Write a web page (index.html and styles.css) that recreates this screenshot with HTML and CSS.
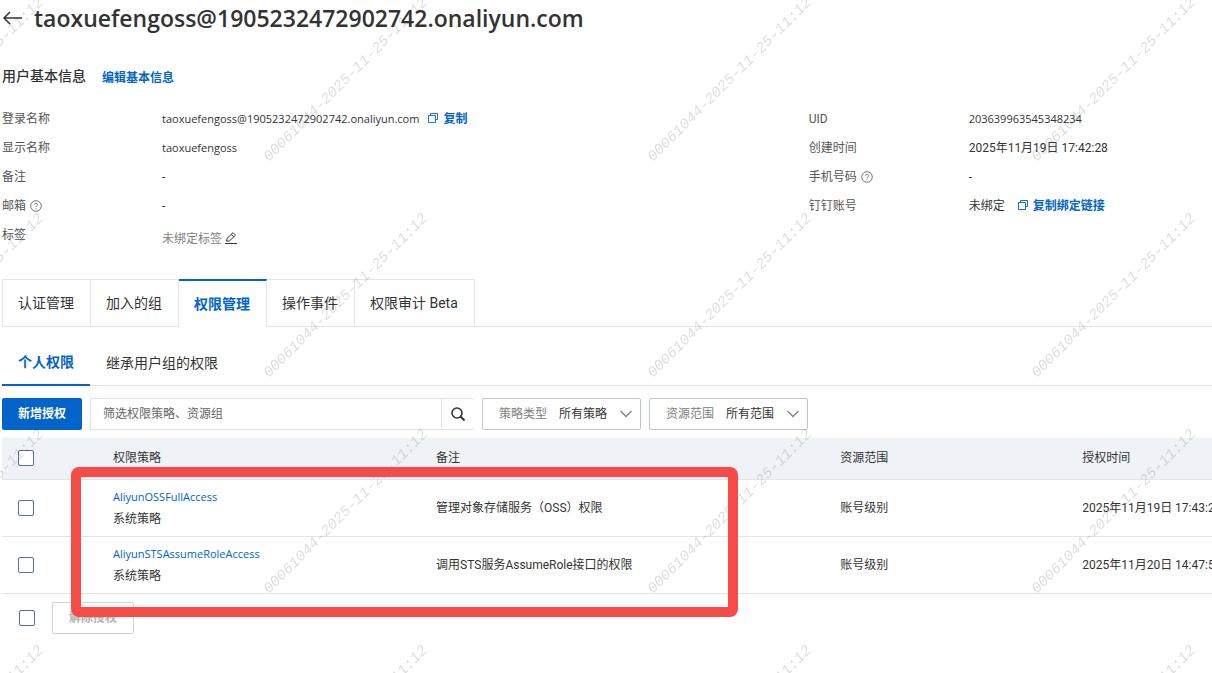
FILE: index.html
```html
<!DOCTYPE html>
<html lang="zh-CN">
<head>
    <meta charset="UTF-8">
    <meta name="viewport" content="width=device-width, initial-scale=1.0">
    <title>用户详情</title>
    <link rel="stylesheet" href="styles.css">
</head>
<body>
    <!-- Shared icons -->
    <svg class="icon-defs" aria-hidden="true">
        <symbol id="icon-copy" viewBox="0 0 10 10">
            <path d="M2.5 2.5V.5h7v6h-2M.5 2.5h7v7h-7z" fill="none" stroke="currentColor" stroke-width=".9"/>
        </symbol>
        <symbol id="icon-help" viewBox="0 0 12 12">
            <circle cx="6" cy="6" r="5.3" fill="none" stroke="currentColor" stroke-width=".8"/>
            <path d="M4.4 4.8c0-2 3.2-2 3.2 0C7.6 5.8 6 5.9 6 7.2M6 8.2v1" fill="none" stroke="currentColor" stroke-width=".8"/>
        </symbol>
    </svg>

    <div class="page">
        <header class="page-header">
            <button class="back" aria-label="返回">
                <svg width="22" height="18" viewBox="0 0 22 18"><path d="M8 3 2 9l6 6M2 9h18" fill="none" stroke="currentColor" stroke-width="1.5"/></svg>
            </button>
            <h1>taoxuefengoss@1905232472902742.onaliyun.com</h1>
        </header>

        <main>
            <!-- Basic info -->
            <section class="info">
                <div class="info-title">
                    <h2>用户基本信息</h2>
                    <a href="#">编辑基本信息</a>
                </div>
                <div class="info-grid">
                    <dl>
                        <dt>登录名称</dt>
                        <dd><span class="latin">taoxuefengoss@1905232472902742.onaliyun.com</span> <a class="copy-link" href="#"><svg class="copy"><use href="#icon-copy"/></svg>复制</a></dd>
                        <dt>显示名称</dt>
                        <dd class="latin">taoxuefengoss</dd>
                        <dt>备注</dt>
                        <dd>-</dd>
                        <dt>邮箱 <svg class="help"><use href="#icon-help"/></svg></dt>
                        <dd>-</dd>
                        <dt>标签</dt>
                        <dd class="tags">未绑定标签
                            <button class="edit" aria-label="编辑标签">
                                <svg width="12" height="12" viewBox="0 0 12 12"><path d="M0 11.5h12M1.5 9.2l.5-2.7L8 .7l2.5 2.500-6 5.700zM6.300 2.400l2.500 2.500" fill="none" stroke="currentColor"/></svg>
                            </button>
                        </dd>
                    </dl>
                    <dl>
                        <dt>UID</dt>
                        <dd class="latin">203639963545348234</dd>
                        <dt>创建时间</dt>
                        <dd>2025年11月19日 17:42:28</dd>
                        <dt>手机号码 <svg class="help"><use href="#icon-help"/></svg></dt>
                        <dd>-</dd>
                        <dt>钉钉账号</dt>
                        <dd>未绑定 <a class="bind-link" href="#"><svg class="copy"><use href="#icon-copy"/></svg>复制绑定链接</a></dd>
                    </dl>
                </div>
            </section>

            <!-- Tabs -->
            <nav class="tabs">
                <button>认证管理</button>
                <button>加入的组</button>
                <button class="active">权限管理</button>
                <button>操作事件</button>
                <button>权限审计 Beta</button>
            </nav>
            <nav class="subtabs">
                <button class="active">个人权限</button>
                <button>继承用户组的权限</button>
            </nav>

            <!-- Toolbar -->
            <div class="toolbar">
                <button class="primary">新增授权</button>
                <div class="search">
                    <input type="text" placeholder="筛选权限策略、资源组" aria-label="筛选权限策略、资源组">
                    <button aria-label="搜索">
                        <svg width="16" height="16" viewBox="0 0 16 16"><circle cx="7" cy="7" r="5" fill="none" stroke="currentColor" stroke-width="1.6"/><path d="M10.5 10.5l4 4" stroke="currentColor" stroke-width="2"/></svg>
                    </button>
                </div>
                <div class="filter">
                    <label for="policy-type">策略类型</label>
                    <select id="policy-type"><option>所有策略</option></select>
                    <svg width="12" height="8" viewBox="0 0 12 8"><path d="M.5 1 6 6.5 11.5 1" fill="none" stroke="currentColor" stroke-width="1.3"/></svg>
                </div>
                <div class="filter">
                    <label for="resource-scope">资源范围</label>
                    <select id="resource-scope"><option>所有范围</option></select>
                    <svg width="12" height="8" viewBox="0 0 12 8"><path d="M.5 1 6 6.5 11.5 1" fill="none" stroke="currentColor" stroke-width="1.3"/></svg>
                </div>
            </div>

            <!-- Permission list -->
            <section class="permissions">
                <table>
                    <thead>
                        <tr>
                            <th class="col-check"><input type="checkbox" aria-label="全选"></th>
                            <th class="col-policy">权限策略</th>
                            <th class="col-note">备注</th>
                            <th class="col-scope">资源范围</th>
                            <th>授权时间</th>
                        </tr>
                    </thead>
                    <tbody>
                        <tr>
                            <td><input type="checkbox" aria-label="AliyunOSSFullAccess"></td>
                            <td><a class="latin" href="#">AliyunOSSFullAccess</a><p>系统策略</p></td>
                            <td>管理对象存储服务（OSS）权限</td>
                            <td>账号级别</td>
                            <td>2025年11月19日 17:43:22</td>
                        </tr>
                        <tr>
                            <td><input type="checkbox" aria-label="AliyunSTSAssumeRoleAccess"></td>
                            <td><a class="latin" href="#">AliyunSTSAssumeRoleAccess</a><p>系统策略</p></td>
                            <td>调用STS服务AssumeRole接口的权限</td>
                            <td>账号级别</td>
                            <td>2025年11月20日 14:47:50</td>
                        </tr>
                    </tbody>
                </table>
                <div class="batch">
                    <input type="checkbox" aria-label="全选">
                    <button disabled>解除授权</button>
                </div>
                <div class="highlight"></div>
            </section>
        </main>
    </div>

    <!-- Watermark -->
    <svg class="watermark" aria-hidden="true">
        <pattern id="mark" x="153" y="187" width="384" height="216" patternUnits="userSpaceOnUse">
            <text x="192" y="113" text-anchor="middle" transform="rotate(-45 192 108)">00061044-2025-11-25-11:12</text>
        </pattern>
        <rect width="100%" height="100%" fill="url(#mark)"/>
    </svg>
</body>
</html>
```
FILE: styles.css
```css
* {
    margin: 0;
    padding: 0;
    box-sizing: border-box;
}

body {
    font-family: Roboto, "Noto Sans CJK SC", sans-serif;
    font-size: 12px;
    line-height: 20px;
    color: #333;
    background-color: #fff;
    overflow-x: hidden;
}

button,
input,
select {
    font: inherit;
    color: inherit;
    border: none;
    background: none;
}

button {
    cursor: pointer;
}

a {
    color: #0064c8;
    text-decoration: none;
}

/* Account and policy names */
.latin {
    font-family: "Open Sans", sans-serif;
    font-size: 11px;
}

.icon-defs {
    display: none;
}

.page {
    padding-left: 2px;
}

/* Header */
.page-header {
    display: flex;
    align-items: center;
    gap: 10px;
    height: 36px;
}

.back {
    display: flex;
}

h1 {
    font-family: "Open Sans", sans-serif;
    font-size: 23px;
    font-weight: 600;
    line-height: 34px;
}

/* Basic info */
.info-title {
    display: flex;
    align-items: flex-start;
    gap: 16px;
    padding-top: 30px;
}

h2 {
    font-size: 14px;
    font-weight: 500;
}

.info-title a {
    font-weight: 700;
    line-height: 25px;
}

dd a {
    font-weight: 700;
}

.info-grid {
    display: grid;
    grid-template-columns: 2fr 1fr;
    align-items: start;
    padding-top: 13px;
}

dl {
    display: grid;
    grid-template-columns: 160px 1fr;
    grid-auto-rows: 29px;
    align-items: center;
    white-space: nowrap;
}

dt {
    color: #555;
}

.copy {
    width: 10px;
    height: 10px;
    margin: 0 5px 0 2px;
}

.copy-link {
    margin-left: 4px;
}

.bind-link {
    margin-left: 8px;
}

.help {
    width: 12px;
    height: 12px;
    margin-left: 1px;
    vertical-align: -2px;
}

.tags {
    color: #808080;
    padding-top: 10px;
}

.edit {
    color: #333;
    vertical-align: -1px;
}

/* Tabs */
.tabs {
    display: flex;
    margin-top: 30px;
    font-size: 14px;
    box-shadow: inset 0 -1px #e3e4e6;
}

.tabs button {
    height: 48px;
    padding: 0 16px 0 15px;
    border: 1px solid #e3e4e6;
    border-left: none;
}

.tabs button:first-child {
    padding-left: 15px;
    border-left: 1px solid #e3e4e6;
}

.tabs .active {
    color: #0064c8;
    font-weight: 700;
    background-color: #fff;
    border-top: 2px solid #0064c8;
    border-bottom: none;
}

.subtabs {
    display: flex;
    height: 59px;
    font-size: 14px;
    border-bottom: 1px solid #e3e4e6;
}

.subtabs button {
    height: 59px;
    padding: 12px 16px 0;
}

.subtabs .active {
    color: #0064c8;
    font-weight: 700;
    border-bottom: 2px solid #0064c8;
}

/* Toolbar */
.toolbar {
    display: flex;
    gap: 8px;
    padding: 12px 0 8px;
}

.primary {
    width: 80px;
    height: 32px;
    color: #fff;
    font-weight: 700;
    background-color: #0064c8;
    border-radius: 2px;
}

.search {
    display: flex;
    width: 384px;
    border: 1px solid #e3e4e6;
    border-right: none;
    border-radius: 2px;
}

.search input {
    flex: 1;
    padding: 0 12px;
    border-right: 1px solid #e3e4e6;
}

.search input::placeholder {
    color: #666;
}

.search button {
    display: flex;
    align-items: center;
    justify-content: center;
    width: 32px;
}

.filter {
    display: flex;
    align-items: center;
    width: 159px;
    height: 32px;
    padding: 0 8px 0 16px;
    border: 1px solid #c0c6cc;
    border-radius: 2px;
    color: #808080;
}

.filter select {
    flex: 1;
    margin-left: 12px;
    color: #333;
    appearance: none;
}

/* Permission list */
.permissions {
    position: relative;
}

table {
    width: 100%;
    table-layout: fixed;
    border-collapse: collapse;
}

th,
td {
    padding: 0 16px;
    text-align: left;
    font-weight: 400;
    white-space: nowrap;
    border-bottom: 1px solid #e3e4e6;
}

th {
    height: 41px;
    background-color: #eff3f8;
}

td {
    height: 57px;
}

td a,
td p {
    display: block;
    line-height: 22px;
}

th:last-child,
td:last-child {
    padding-right: 0;
}

.col-check {
    width: 95px;
}

.col-policy {
    width: 26.7%;
}

.col-note {
    width: 33.4%;
}

.col-scope {
    width: 20%;
}

input[type="checkbox"] {
    display: block;
    width: 16px;
    height: 16px;
    appearance: none;
    background-color: #fff;
    border: 1px solid #4f709c;
    border-radius: 2px;
}

.batch {
    display: flex;
    align-items: center;
    gap: 17px;
    padding: 8px 17px;
}

.batch button {
    width: 82px;
    height: 32px;
    color: #b3b3b3;
    font-weight: 700;
    border: 1px solid #d0d3d8;
    border-radius: 2px;
}

/* Red frame round the granted policies */
.highlight {
    position: absolute;
    top: 29px;
    left: 69px;
    width: 667px;
    height: 150px;
    border: 10px solid #f74b47;
    border-radius: 8px;
    pointer-events: none;
    z-index: 2;
}

/* Watermark */
.watermark {
    position: fixed;
    top: 0;
    left: 0;
    width: 100%;
    height: 100%;
    pointer-events: none;
    z-index: 1;
}

.watermark text {
    font-family: "Liberation Mono", monospace;
    font-size: 15px;
    font-style: italic;
    fill: rgba(0, 0, 0, 0.13);
}
```
